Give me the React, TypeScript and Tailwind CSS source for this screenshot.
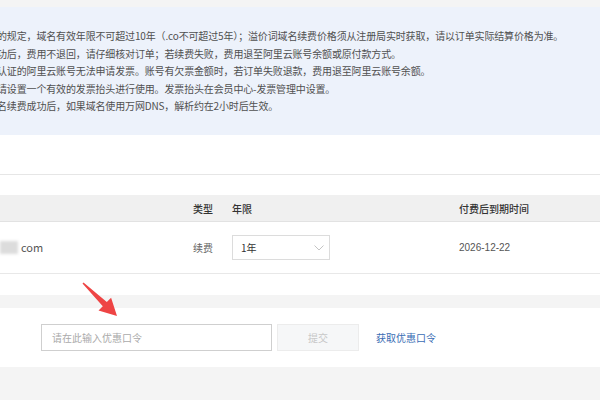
import React from 'react';

const notices = [
  '的规定，域名有效年限不可超过10年（.co不可超过5年）；溢价词域名续费价格须从注册局实时获取，请以订单实际结算价格为准。',
  '功后，费用不退回，请仔细核对订单；若续费失败，费用退至阿里云账号余额或原付款方式。',
  '认证的阿里云账号无法申请发票。账号有欠票金额时，若订单失败退款，费用退至阿里云账号余额。',
  '请设置一个有效的发票抬头进行使用。发票抬头在会员中心-发票管理中设置。',
  '名续费成功后，如果域名使用万网DNS，解析约在2小时后生效。',
];

function Chevron() {
  return (
    <svg width="10" height="6" viewBox="0 0 10 6" fill="none">
      <path d="M0.5 0.5 L5 5 L9.5 0.5" stroke="#c4c4c4" strokeWidth="1" />
    </svg>
  );
}

export default function App() {
  return (
    <div className="relative w-[600px] h-[400px] overflow-hidden bg-[#f4f4f4] font-['Noto_Sans_CJK_SC','Noto_Sans',sans-serif]">
      <div className="h-[7px]" />

      {/* notice box */}
      <div className="h-[128px] bg-[#edf2fb] pt-[20px] overflow-hidden">
        <div className="-ml-[3px] text-[10px] leading-[17.5px] tracking-[-0.15px] text-[#505050] whitespace-nowrap">
          {notices.map((n, i) => (
            <div key={i}>{n}</div>
          ))}
        </div>
      </div>

      {/* table card */}
      <div className="bg-white">
        <div className="h-[40px] border-b border-[#e6e6e6]" />
        <div className="h-[20px]" />
        <div className="flex items-center h-[27px] bg-[#f0f0f0] border-b border-[#e2e2e2] text-[10px] text-[#333] font-medium">
          <div className="w-[193px]" />
          <div className="w-[39px]">类型</div>
          <div className="w-[227px]">年限</div>
          <div>付费后到期时间</div>
        </div>
        <div className="flex items-center h-[52px] border-b border-[#e8e8e8] text-[10px] text-[#555]">
          <div className="w-[193px] flex items-center">
            <div className="w-[18px] h-[13px] bg-[#dcdcdc] blur-[1.5px]" />
            <span className="ml-[3px] text-[11px] text-[#555]">com</span>
          </div>
          <div className="w-[39px] text-[#666]">续费</div>
          <div className="w-[227px]">
            <div className="flex items-center justify-between w-[98px] h-[25px] border border-[#dcdcdc] pl-[8px] pr-[5px] text-[#333]">
              <span>1年</span>
              <Chevron />
            </div>
          </div>
          <div className="font-['Liberation_Sans',sans-serif] text-[#555]">2026-12-22</div>
        </div>
        <div className="h-[21px]" />
      </div>

      <div className="h-[13px]" />

      {/* coupon row */}
      <div className="h-[59px] bg-white flex items-start pt-[16px] pl-[41px]">
        <div className="flex items-center w-[231px] h-[27px] border border-[#cfcfcf] pl-[10px] text-[10px] text-[#aaa]">
          请在此输入优惠口令
        </div>
        <div className="ml-[5px] flex items-center justify-center w-[82px] h-[27px] bg-[#f6f7f8] border border-[#ececec] text-[10px] text-[#c8c8c8]">
          提交
        </div>
        <div className="ml-[17px] h-[27px] flex items-center text-[10px] text-[#3a6db4]">获取优惠口令</div>
      </div>

      {/* annotation arrow */}
      <svg className="absolute left-0 top-0 pointer-events-none" width="600" height="400">
        <polygon
          points="82.5,283.5 102.8,306.3 98.5,310.6 117,316 111.1,297.8 106.8,302.1 83.5,282.5"
          fill="#ee4444"
        />
      </svg>
    </div>
  );
}
